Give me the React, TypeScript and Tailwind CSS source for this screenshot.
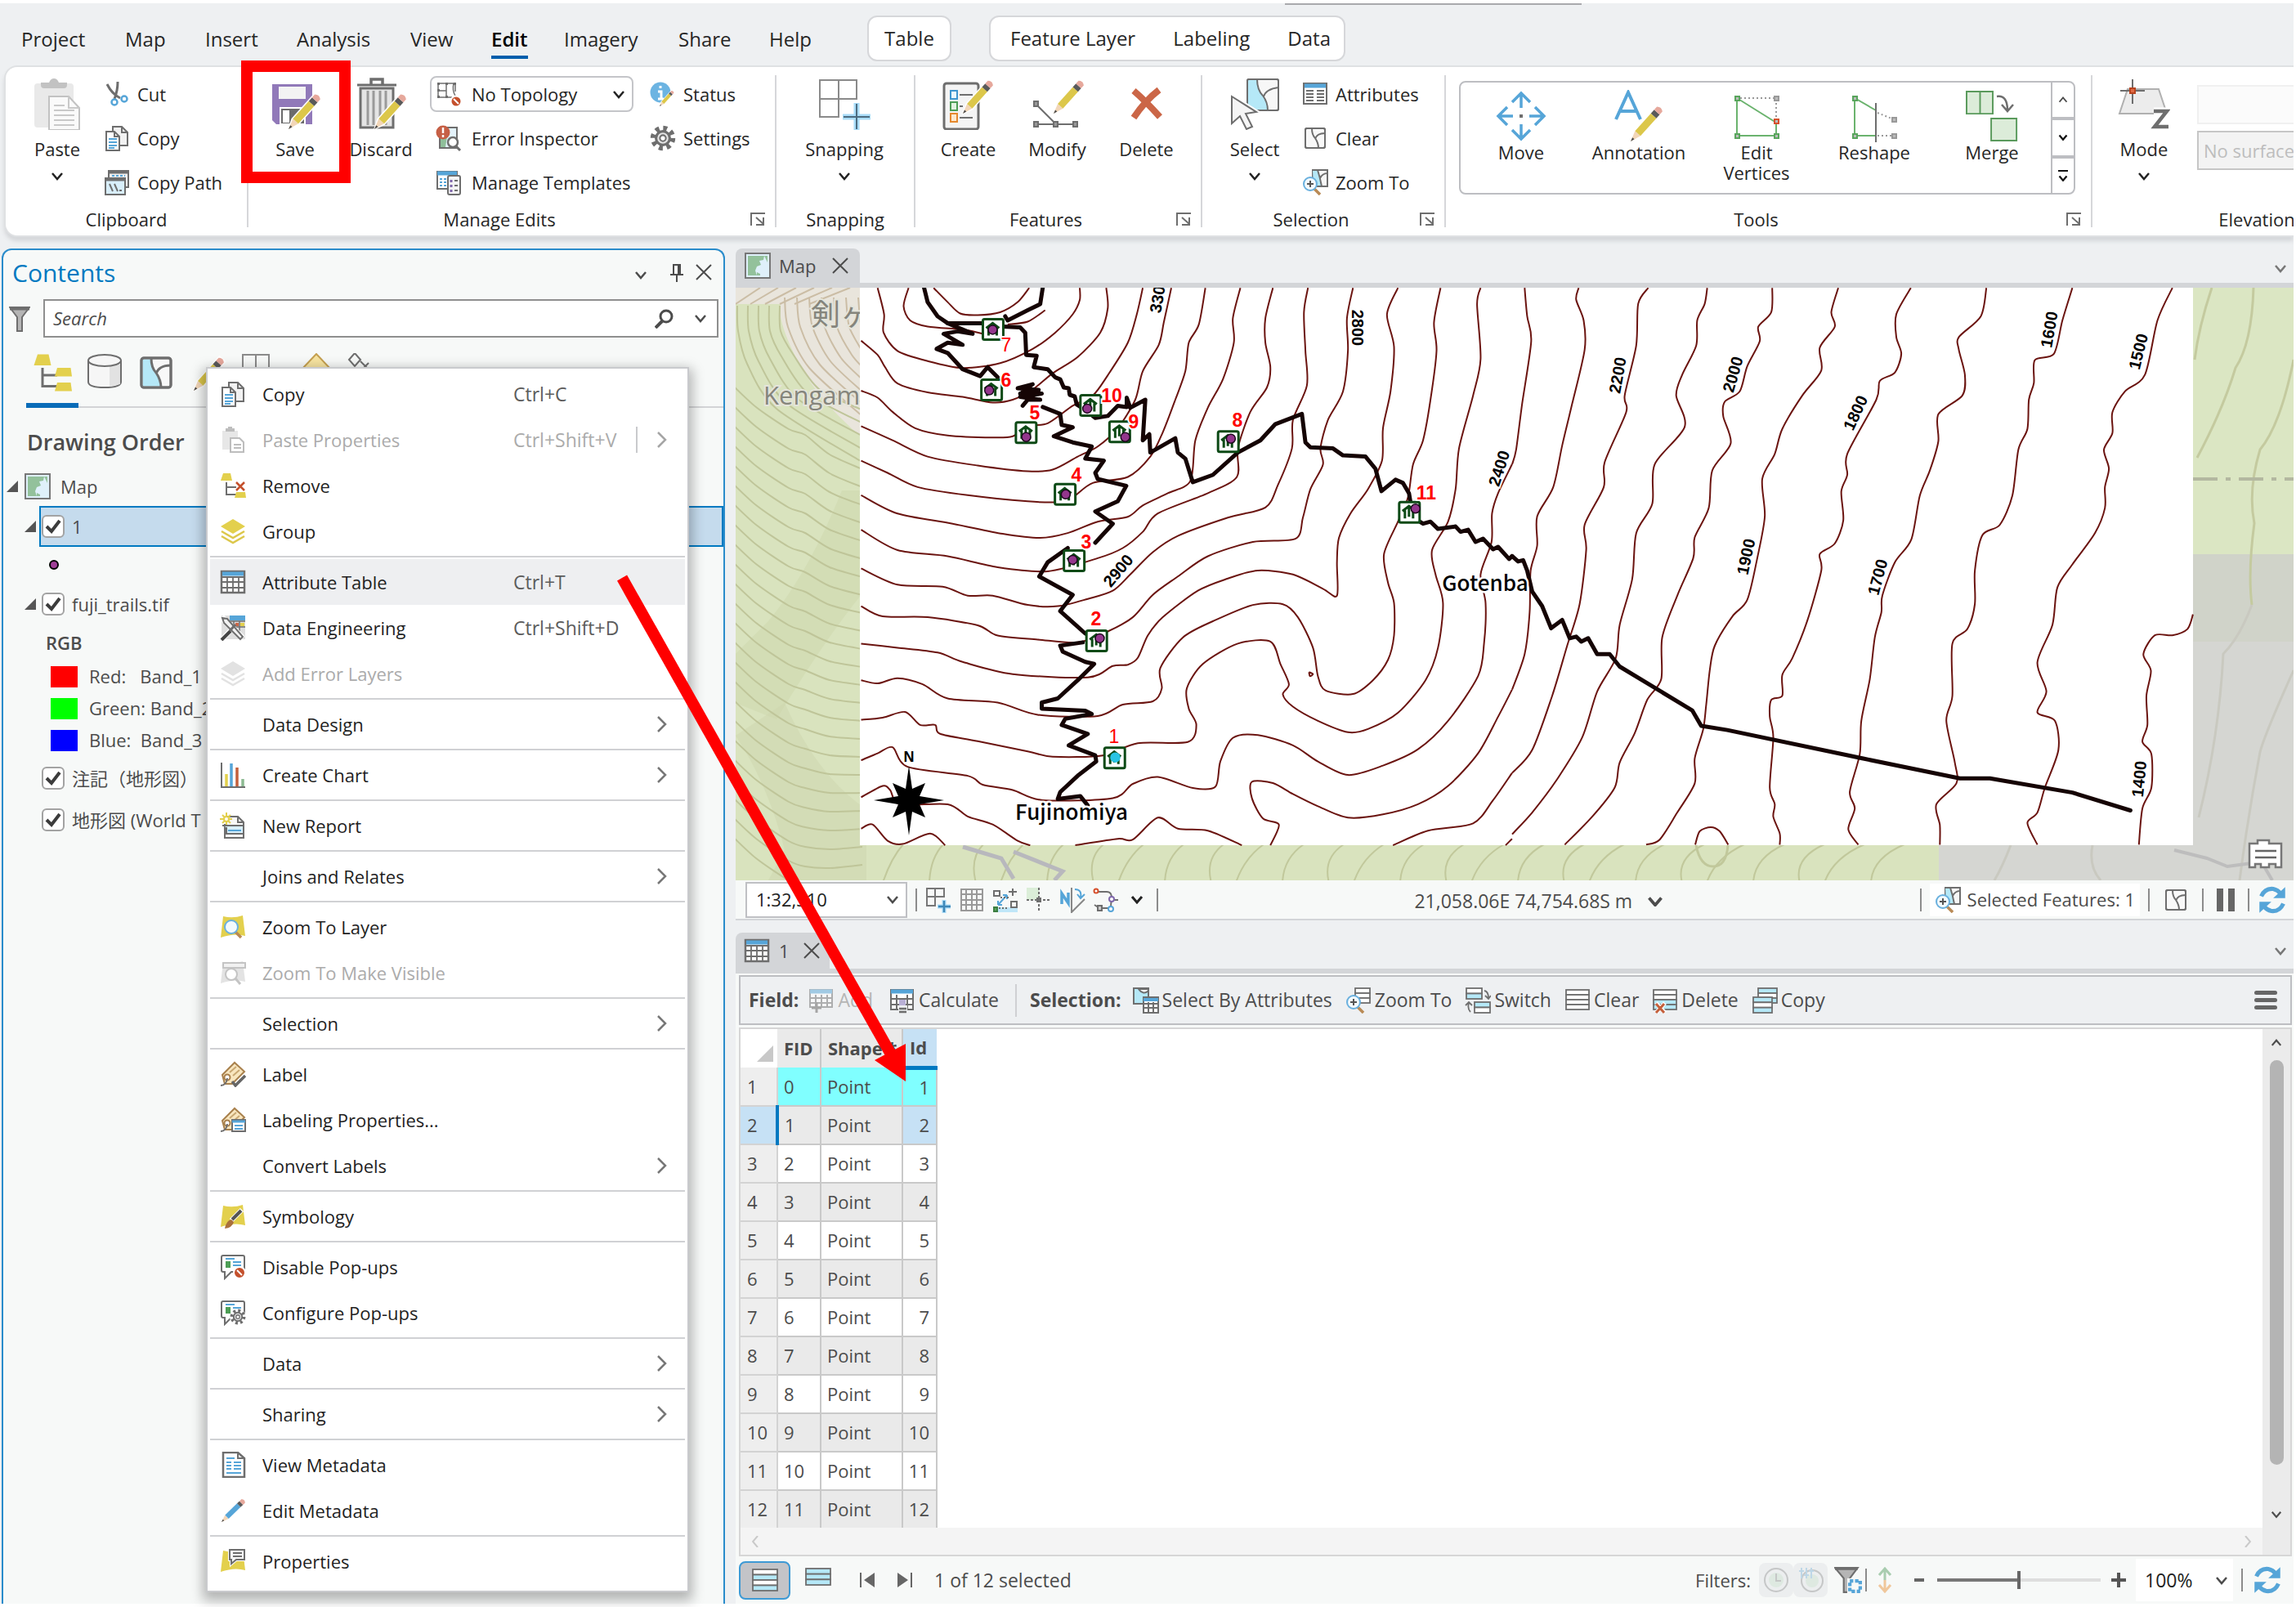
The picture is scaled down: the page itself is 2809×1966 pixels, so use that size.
import React from "react";

type P = { className?: string; children?: React.ReactNode };
const G = "#6e6e6e";
const BL = "#56a5d8";
const PALE = "#b5e8f7";
const YEL = "#e3d04d";

function I({ className = "size-8", children, vb = "0 0 32 32" }: P & { vb?: string }) {
  return (
    <svg viewBox={vb} className={className + " shrink-0"} fill="none" stroke={G} strokeWidth={2} aria-hidden="true">
      {children}
    </svg>
  );
}

function Pencil({ x, y, s = 1, a = 42, body = "#dcc74a" }: { x: number; y: number; s?: number; a?: number; body?: string }) {
  return (
    <g transform={`translate(${x} ${y}) rotate(${a}) scale(${s})`} stroke="none">
      <path d="M0 2L-6-12V-56H6V-12Z" fill="#fff" />
      <path d="M0 0L-4.500-13H4.500Z" fill="#f2d6b8" />
      <path d="M0 0L-1.600-5H1.600Z" fill="#4a4a4a" />
      <path d="M-4.500-13H4.500V-42H-4.500Z" fill={body} />
      <path d="M-4.500-42H4.500V-48H-4.500Z" fill="#5a5a5a" />
      <path d="M-4.500-48H4.500V-53Q0-57-4.500-53Z" fill="#e6a89c" />
    </g>
  );
}

function Chevron({ className = "w-4", color = "#4c4c4c", w = 2.5, d = "M2 2L8 9L14 2" }: { className?: string; color?: string; w?: number; d?: string }) {
  return (
    <svg viewBox="0 0 16 11" className={className + " shrink-0"} fill="none" stroke={color} strokeWidth={w} aria-hidden="true">
      <path d={d} />
    </svg>
  );
}
function Close({ className = "size-5" }: P) {
  return (
    <svg viewBox="0 0 20 20" className={className} fill="none" stroke="#4c4c4c" strokeWidth={2} aria-hidden="true">
      <path d="M1 1L19 19M19 1L1 19" />
    </svg>
  );
}

/* ---------- large ribbon icons ---------- */
const big = "size-16";
const PasteBig = () => (
  <I className={big} vb="0 0 64 64">
    <rect x="4" y="7" width="48" height="54" rx="4" fill="#e9e9e9" stroke="none" />
    <path d="M12 6H22Q24 1 28 1T34 6H44V9Q44 13 40 13H16Q12 13 12 9Z" fill="#c2c2c2" stroke="none" />
    <path d="M22 23H46L59 37V64H22Z" fill="#fafafa" stroke="#c2c2c2" />
    <path d="M46 23V37H59M28 34H41M28 40H53M28 46H53M28 52H53M28 58H53" stroke="#c9c9c9" />
  </I>
);
const SaveBig = () => (
  <I className={big} vb="0 0 64 64">
    <path d="M4 8H53V57H9L4 52Z" fill="#9179b9" stroke="none" />
    <path d="M12 11H45V26H12Z" fill="#f3f3f3" stroke="none" />
    <path d="M14 37H44V57H14Z" fill="#6b6b6b" stroke="#fff" />
    <path d="M17 40H25V55H17Z" fill="#fff" stroke="none" />
    <Pencil x={24} y={63} />
  </I>
);
const DiscardBig = () => (
  <I className={big} vb="0 0 64 64">
    <path d="M20 8V2H34V8" strokeWidth="3.500" />
    <path d="M3 9H51" strokeWidth="3" />
    <path d="M7 13H47V61H7Z" fill="#e4e4e4" strokeWidth="3" />
    <path d="M16 16V58M23 16V58M31 16V58M38 16V58" stroke="#9a9a9a" strokeWidth="3" />
    <Pencil x={24} y={63} />
  </I>
);
const SnapBig = () => (
  <I className={big} vb="0 0 64 64">
    <path d="M2 3H47V26H25V48H2Z M2 26H25V3" stroke="#8a8a8a" />
    <path d="M30 48H64M47 31V64" stroke="#a9dcf8" strokeWidth="7" />
    <path d="M31 48H63M47 32V63" stroke="#4c6c80" />
  </I>
);
const CreateBig = () => (
  <I className={big} vb="0 0 64 64">
    <rect x="2" y="7" width="42" height="56" rx="3" fill="#f4f4f4" strokeWidth="3" />
    <path d="M10 16H18V26H10Z" stroke="#3f95cf" fill="#eaf6fd" />
    <path d="M10 30H18V40H10Z" stroke="#4d9e55" fill="#e2f3e0" />
    <path d="M10 44H18V54H10Z" stroke="#e5892f" fill="#fde9cf" />
    <path d="M21 21H37M21 35H25M21 49H37" />
    <Pencil x={25} y={44} s={0.95} />
  </I>
);
const ModifyBig = () => (
  <I className={big} vb="0 0 64 64">
    <path d="M5 32L30 57M5 57H54" />
    <path d="M3 29H8V35H3ZM3 54H8V60H3ZM27 54H32V60H27ZM51 54H56V60H51Z" fill="#999" />
    <Pencil x={27} y={44} s={0.95} />
  </I>
);
const DeleteBig = () => (
  <I className={big} vb="0 0 64 64">
    <path d="M16 16Q30 28 48 48M47 15Q30 28 16 49" stroke="#cb6647" strokeWidth="8" />
  </I>
);
const SelectBig = () => (
  <I className={big} vb="0 0 64 64">
    <rect x="23" y="2" width="38" height="38" rx="2" fill="#f7f7f7" />
    <path d="M24 3H35Q35 15 42 22Q48 30 47 39H24Z" fill={PALE} stroke="none" />
    <path d="M35 2Q35 15 42 22Q48 30 48 40M43 23Q46 14 61 12" />
    <rect x="23" y="2" width="38" height="38" rx="2" />
    <path d="M4 23L34 42L21 44L29 60L22 63L14 47L4 56Z" fill="#f5f5f5" stroke="#fff" strokeWidth="6" />
    <path d="M4 23L34 42L21 44L29 60L22 63L14 47L4 56Z" fill="#f5f5f5" />
  </I>
);
const MoveBig = () => (
  <I className={big} vb="0 0 64 64">
    <g stroke={BL} strokeWidth="3.500">
      <path d="M32 22V5M21 15L32 4L43 15M32 42V59M21 49L32 60L43 49M22 32H5M15 21L4 32L15 43M42 32H59M49 21L60 32L49 43" />
    </g>
    <path d="M30 30H34V34H30Z" fill={G} stroke="none" />
  </I>
);
const AnnoBig = () => (
  <I className={big} vb="0 0 64 64">
    <path d="M4 36L19 3L34 36M9 26H29" stroke={BL} strokeWidth="4" />
    <Pencil x={22} y={63} />
  </I>
);
const Sq = ({ x, y, c = "#58a55c" }: { x: number; y: number; c?: string }) => <rect x={x - 2} y={y - 2} width="5" height="5" fill="#bbb" stroke={c} />;
const EditVertBig = () => (
  <I className={big} vb="0 0 64 64">
    <path d="M8 10V56H56V40L8 10" stroke="#6bb36e" />
    <path d="M12 10H56V36" stroke="#999" strokeDasharray="2 3" />
    <Sq x={8} y={10} /><Sq x={8} y={56} /><Sq x={56} y={56} /><Sq x={56} y={10} c="#999" /><Sq x={56} y={38} c="#d6502c" />
  </I>
);
const ReshapeBig = () => (
  <I className={big} vb="0 0 64 64">
    <path d="M8 56V10L34 25M8 56H34" stroke="#6bb36e" />
    <path d="M36 28L56 36M36 56H56" stroke="#999" strokeDasharray="2 3" />
    <path d="M34 16V64" />
    <Sq x={8} y={10} /><Sq x={8} y={56} /><Sq x={56} y={56} c="#999" /><Sq x={56} y={36} c="#999" />
  </I>
);
const MergeBig = () => (
  <I className={big} vb="0 0 64 64">
    <path d="M0 2H33V30H0ZM17 2V30M31 36H63V64H31Z" fill="#dcecd9" stroke="#5a9a5c" transform="translate(1 0) scale(.97)" />
    <path d="M38 8Q51 6 51 25M44 18L51 26L58 18" strokeWidth="2.500" />
  </I>
);
const ModeBig = () => (
  <I className={big} vb="0 0 64 64">
    <path d="M12 14H50L60 44H2Z" fill="#ececec" stroke="#b0b0b0" />
    <path d="M18 2V32M3 16H33" />
    <path d="M15 13H21V19H15Z" fill="#e06a45" stroke="#b8441f" />
    <path d="M44 41H60L45 60H62" stroke="#fff" strokeWidth="9" />
    <path d="M44 41H60L45 60H62" strokeWidth="4.500" />
  </I>
);

/* ---------- small icons ---------- */
const CopyI = () => (
  <I>
    <path d="M11 2H22L29 9V25H11Z" fill="#f2f2f2" />
    <path d="M22 2V9H29" />
    <path d="M3 8H13L19 14V31H3Z" fill="#fff" />
    <path d="M13 8V14H19" />
    <path d="M6 17H16M6 21H16M6 25H16M6 28H13" stroke={BL} />
  </I>
);
const CutI = () => (
  <I>
    <path d="M4 4Q10 16 20 21M17 1Q17 12 13 22" strokeWidth="3" />
    <circle cx="13" cy="26" r="3.500" stroke={BL} strokeWidth="2.500" /><circle cx="25" cy="22" r="3.500" stroke={BL} strokeWidth="2.500" />
  </I>
);
const CopyPathI = () => (
  <I>
    <path d="M6 2H30V22H6Z" fill="#eee" /><path d="M6 4H30" strokeWidth="3" /><path d="M10 8H26" stroke={BL} strokeDasharray="3 2" />
    <path d="M2 11H26V31H2Z" fill="#d8eefa" /><path d="M2 13H26" strokeWidth="3" /><path d="M7 18L11 27M13 18L17 27M19 26H22" />
  </I>
);
const No = ({ x, y, r = 7 }: { x: number; y: number; r?: number }) => (
  <g stroke="#fff"><circle cx={x} cy={y} r={r} fill="#c4502c" /><path d={`M${x - 3} ${y - 3}L${x + 3} ${y + 3}`} /></g>
);
const TopoI = () => (
  <I>
    <path d="M3 3H24V13M3 3V20H20M13 3V20M3 12H13M22 3Q20 12 24 18" strokeWidth="1.500" />
    <path d="M2 2H5V5H2ZM12 2H15V5H12ZM22 2H25V5H22ZM2 18H5V21H2ZM12 18H15V21H12ZM2 10H5V13H2Z" fill={G} stroke="none" />
    <No x={25} y={25} r={6.500} />
  </I>
);
const ErrI = () => (
  <I>
    <path d="M5 3H26V28H5Z" fill="#e3f2fa" /><path d="M6 14H14L12 27H6Z" fill="#8fbf9a" stroke="none" />
    <circle cx="21" cy="21" r="6" fill="#fff" strokeWidth="2.500" /><path d="M25 26L30 31" strokeWidth="3" />
    <circle cx="9" cy="9" r="8.500" fill="#c65f45" stroke="none" /><path d="M9 3V10M9 12V15" stroke="#fff" strokeWidth="2.500" />
  </I>
);
const TemplI = () => (
  <I>
    <path d="M2 3H26V24H2Z" fill="#fff" /><path d="M2 5H26" stroke={BL} strokeWidth="5" /><path d="M5 12H14M5 16H14M5 20H14" stroke={BL} strokeDasharray="3 2" />
    <rect x="15" y="8" width="15" height="23" rx="2" fill="#f5f5f5" /><path d="M19 13V29" stroke="#8068ac" strokeWidth="3" strokeDasharray="3 3" /><path d="M23 14H27M23 20H27M23 26H27" />
  </I>
);
const StatusI = () => (
  <I>
    <circle cx="13" cy="14" r="12.500" fill="#6cb4e2" stroke="none" /><path d="M13 6V9M10 13H14V21M10 22H17" stroke="#fff" strokeWidth="3" />
    <Pencil x={12} y={31} s={0.45} />
  </I>
);
const Gear = ({ x = 16, y = 16, s = 1 }) => (
  <g transform={`translate(${x} ${y}) scale(${s})`}>
    <circle r="11.500" strokeWidth="6" strokeDasharray="4.500 4.530" stroke={G} />
    <circle r="8" fill="#e4e4e4" strokeWidth="3" /><circle r="3.500" fill="#fff" />
  </g>
);
const GearI = () => <I><Gear s={1.05} /></I>;
const AttrI = () => (
  <I><path d="M2 3H30V28H2Z" fill="#fff" /><path d="M3 6H29" stroke={BL} strokeWidth="5" /><path d="M5 12H14M5 16H14M5 20H14M5 24H14M18 12H27M18 16H27M18 20H27M18 24H27" /></I>
);
const ShapeI = ({ className, blue = false }: { className?: string; blue?: boolean }) => (
  <I className={className}>
    <rect x="4" y="4" width="24" height="24" rx="2" fill="#f8f8f8" />
    {blue && <path d="M5 5H12Q12 12 16 16Q20 22 20 27H5Z" fill={PALE} stroke="none" />}
    <path d="M12 4Q12 12 16 16Q20 22 20 28M16 17Q18 10 28 10" /><rect x="4" y="4" width="24" height="24" rx="2" />
  </I>
);
const Mag = ({ x = 10, y = 18, plus = true }) => (
  <>
    <path d={`M${x + 5} ${y + 6}L${x + 12} ${y + 13}`} stroke="#b98a55" strokeWidth="3.500" />
    <circle cx={x} cy={y} r="8" fill="#f3fafe" stroke="#69b0de" />
    {plus && <path d={`M${x - 4} ${y}H${x + 4}M${x} ${y - 4}V${y + 4}`} stroke="#555" />}
  </>
);
const ZoomI = () => (
  <I><path d="M13 1H31V21H13Z" fill="#f7f7f7" /><path d="M13 2H19L24 20H14Z" fill={PALE} stroke="none" /><path d="M19 1Q22 10 24 21M22 11Q25 5 31 5" /><Mag /></I>
);
const GridI = ({ className }: P) => (
  <I className={className}><path d="M2 3H30V29H2Z" fill="#fff" strokeWidth="2.500" /><path d="M3 6H29" stroke={BL} strokeWidth="5" /><path d="M2 10H30M2 16H30M2 23H30M9 10V29M16 10V29M23 10V29" strokeWidth="1.800" /></I>
);
const Stack = ({ c, c2 }: { c: string; c2: string }) => (
  <I><path d="M16 1L31 10L16 19L1 10Z" fill={c} stroke="none" /><path d="M2 16L16 24L30 16M2 22L16 30L30 22" stroke={c2} strokeWidth="2.500" /></I>
);
const Tree = ({ x = false, className }: { x?: boolean; className?: string }) => (
  <I className={className}>
    <path d="M4 1H13L15 10H1Z" fill={YEL} stroke="none" /><path d="M8 12V27H20M8 18H20" />
    {x ? <path d="M20 12L30 22M30 12L20 22" stroke="#c4502c" strokeWidth="2.500" /> : <path d="M20 12H31L32 19H18Z" fill={YEL} stroke="none" />}
    <path d="M20 24H31L32 31H18Z" fill={YEL} stroke="none" />
  </I>
);
const PastePropI = () => (
  <I><g opacity=".45"><path d="M3 5H22V14H12V28H3Z" fill="#ccc" stroke="none" /><path d="M7 4H18M10 1H15" strokeWidth="4" /><path d="M13 14H24L29 19V31H13Z" fill="#fff" /><path d="M17 22H26M17 26H26" /></g></I>
);
const EngI = () => (
  <I><path d="M2 1H31V30H2Z" fill="#dedede" stroke="none" /><path d="M12 4H31" stroke={BL} strokeWidth="6" /><path d="M10 8H31M17 8V20M24 8V22M17 15H31" strokeWidth="1.500" /><path d="M19 10H23V14H19Z" fill="#cb6647" stroke="none" /><path d="M25 10H30V14H25Z" fill={YEL} stroke="none" /><path d="M2 3L28 29" stroke="#fff" strokeWidth="8" /><path d="M2 31L17 15" stroke="#fff" strokeWidth="6" /><path d="M3 4L9 5L28 27L25 30L5 10Z" fill="#f2f2f2" /><path d="M2 31L13 20" stroke="#444" strokeWidth="4" /><path d="M12 20L19 12" strokeWidth="3" /></I>
);
const ChartI = () => (
  <I><g strokeWidth="3.500"><path d="M8 15V30" stroke={YEL} /><path d="M14 2V30" stroke={BL} /><path d="M21 7V30" stroke="#c4603c" /><path d="M28 21V30" stroke="#8cba92" /></g><path d="M2 1V31H31" /></I>
);
const ReportI = () => (
  <I><path d="M8 5H22L29 12V31H6V14" fill="#f7f7f7" /><path d="M22 5V12H29" /><path d="M3 16H29V26H8V18" fill="#d8effb" stroke={G} /><path d="M10 22H26" stroke={BL} /><path d="M8 0V15M0 8H15M3 3L13 13M13 3L3 13" stroke={YEL} /><circle cx="8" cy="8" r="3" fill="#fff" stroke={YEL} /></I>
);
const Sheet = ({ c = YEL }) => <path d="M4 3Q16 6 28 2L31 27Q18 23 1 29Z" fill={c} stroke="none" />;
const ZoomLayerI = () => <I><Sheet /><Mag x={14} y={16} plus={false} /></I>;
const ZoomVisI = () => <I><g opacity=".4"><Sheet c="#bbb" /><path d="M4 4H31V10H4Z" fill="#ddd" /><circle cx="14" cy="18" r="7" fill="#fff" /><path d="M19 23L25 30" strokeWidth="3" /></g></I>;
const Tag = () => (
  <><path d="M3 17L18 2L30 13L15 28H6Z" fill="#f8e6bf" stroke="#a9814d" /><path d="M12 14L20 7M16 18L24 11" stroke="#c9a873" /><circle cx="9" cy="20" r="3.500" fill="#fff" stroke="#a9814d" /><path d="M1 30Q8 30 9 21" /></>
);
const LabelI = () => <I><Tag /><path d="M15 25L19 30L31 18" stroke="#666" strokeWidth="3.500" /></I>;
const LabelPropI = () => <I><Tag /><path d="M15 16H31V30H15Z" fill="#fff" /><path d="M15 18H31" stroke={BL} strokeWidth="3" /><path d="M18 23H28M18 27H28" stroke={BL} /></I>;
const SymI = () => <I><Sheet /><path d="M27 8L14 21" stroke="#fff" strokeWidth="6" /><path d="M26 9L15 20" stroke="#555" strokeWidth="4" /><path d="M14 20Q8 21 6 31Q15 30 17 23Z" fill="#a9703c" stroke="none" /></I>;
const Bubble = () => (
  <><path d="M4 2H28Q30 2 30 4V20Q30 22 28 22H14L6 30V22H4Q2 22 2 20V4Q2 2 4 2Z" fill="#fff" /><path d="M7 9H13V17H7Z" fill="#4d9e55" stroke="none" /><path d="M7 6H18M16 10H26M16 14H26" stroke={BL} /></>
);
const PopDisI = () => <I><Bubble /><No x={24} y={23} /></I>;
const PopCfgI = () => <I><Bubble /><g><circle cx="22" cy="21" r="10" fill="#fff" stroke="none" /><Gear x={22} y={21} s={0.65} /></g></I>;
const MetaI = () => <I><path d="M4 1H22L30 8V31H4Z" fill="#fff" strokeWidth="2.500" /><path d="M22 1V8H30" /><path d="M8 8H18M8 13H14M17 13H26M8 17H14M17 17H26M8 21H14M17 21H26M8 26H26" stroke={BL} /></I>;
const EditMetaI = () => <I><Pencil x={2} y={30} s={0.7} a={46} body="#56a5d8" /></I>;
const PropI = () => <I><Sheet /><path d="M12 1H31V14H20L14 19V14H12Z" fill="#f7f7f7" stroke="#fff" strokeWidth="4" /><path d="M12 2H30V14H20L14 19V14H12Z" fill="#f7f7f7" /><path d="M16 6H27M16 10H27" /></I>;
const MapI = () => (
  <I><path d="M1 1H31V31H1Z" fill="#dff0fa" stroke="#777" /><path d="M4 4H24L23 9L18 10L20 15L15 17L13 22L15 28H4Z" fill="#93c19b" stroke="none" /><path d="M15 24L19 26V28H15ZM24 4H28V12Z" fill="#93c19b" stroke="none" /></I>
);
const AddGridI = () => <I><path d="M2 2H23V12H12V23H2ZM2 12H12V2" stroke="#777" /><path d="M15 24H31M23 16V32" stroke="#a9dcf8" strokeWidth="5" /><path d="M16 24H31M23 17V31" stroke="#3f88b8" strokeWidth="2.500" /></I>;
const FullGridI = () => <I><path d="M3 3H29V29H3ZM9 3V29M16 3V29M22 3V29M3 9H29M3 16H29M3 22H29" stroke="#999" /></I>;
const InferI = () => <I><path d="M1 31V25H31V31Z" fill="#bfe6f8" stroke="none" /><path d="M2 5H9V11H2ZM23 18H30V25H23Z" /><path d="M25 2V11M20 6H30" /><path d="M7 22L18 10M18 10H13M18 10V15M7 22V17M7 22H12" stroke={BL} /><path d="M10 13H20M8 26H20" strokeDasharray="2 2" /><path d="M2 25H6V30H2Z" fill="#58a55c" stroke="#3d7e41" /></I>;
const CrossI = () => <I><path d="M1 1H16V16H1Z" fill="#dbeed8" stroke="none" /><path d="M16 1V31M1 16H31" strokeDasharray="3 2" /><path d="M13 13H19V19H13Z" fill={G} stroke="none" /></I>;
const NorthI = () => <I><path d="M3 21V8L11 20V7" stroke={BL} strokeWidth="3.500" /><path d="M15 1V31L31 15" stroke="#888" /><path d="M19 3Q28 3 26 13M22 9L26 14L31 9" stroke={BL} /></I>;
const RouteI = () => <I><path d="M4 6H17Q24 6 23 16Q22 20 22 26H8M23 16H31M2 22L8 26" /><circle cx="4" cy="5" r="2.500" fill="#fff" stroke="#d6502c" /><circle cx="23" cy="15" r="3" fill="#fff" stroke="#8068ac" /><circle cx="22" cy="27" r="3" fill="#fff" stroke={BL} /><path d="M6 23H11V29H6Z" fill="#ccc" /></I>;
const Refresh = ({ className = "size-9" }: P) => (
  <I className={className}><path d="M4 12Q8 3 17 4Q22 5 25 9M28 20Q24 29 15 28Q10 27 7 23" stroke={BL} strokeWidth="4.500" /><path d="M30 2V14H17ZM2 30V18H15Z" fill={BL} stroke="none" /></I>
);
const FieldAddI = () => <I><g opacity=".5"><path d="M2 3H29V24H2Z" fill="#fff" /><path d="M2 5H29" stroke={BL} strokeWidth="5" /><path d="M2 13H29M2 19H29M9 9V24M16 9V24M23 9V24" /></g><path d="M10 18V31M4 25H16" stroke="#a5a5a5" strokeWidth="3" /></I>;
const CalcI = () => <I><path d="M2 3H29V27H2Z" fill="#fff" /><path d="M2 5H29" stroke={BL} strokeWidth="5" /><path d="M2 14H29M2 21H29M9 9V27M22 9V27" /><path d="M12 15H20V22H12Z" fill="#b9b0d6" stroke="none" /><path d="M11 22H22V32H11Z" fill="#eef0f2" stroke="none" /><path d="M12 26H21M12 30H21" strokeWidth="2.500" /></I>;
const SelAttrI = () => <I><path d="M1 1H19V20H1Z" fill={PALE} /><path d="M7 2Q13 10 19 4V2Z" fill="#fff" /><path d="M13 12H31V31H13Z" fill="#fff" /><path d="M13 15H31" stroke={BL} strokeWidth="4" /><path d="M13 20H31M13 25H31M19 18V31M25 18V31" /></I>;
const Rows = ({ x, y, w, h, f = ["#fff", "#fff", "#fff"] }: { x: number; y: number; w: number; h: number; f?: string[] }) => (
  <>{f.map((c, i) => <rect key={i} x={x} y={y + (i * h) / f.length} width={w} height={h / f.length} fill={c} strokeWidth="1.800" />)}</>
);
const ZoomRowsI = () => <I><Rows x={12} y={1} w={18} h={18} /><Mag /></I>;
const SwitchI = () => <I><Rows x={2} y={1} w={19} h={13} f={["#fff", PALE]} /><Rows x={12} y={18} w={19} h={13} f={[PALE, "#fff"]} /><path d="M24 4Q29 5 29 13M25 10L29 14L32 10M7 30Q3 26 5 19M1 22L5 18L9 22" strokeWidth="1.800" /></I>;
const ClearRowsI = () => <I><Rows x={2} y={3} w={28} h={24} f={["#fff", "#fff", "#fff", "#fff"]} /></I>;
const DelRowsI = () => <I><Rows x={2} y={3} w={28} h={24} f={["#fff", "#fff", PALE, PALE]} /><path d="M5 19L16 31M16 19L5 31" stroke="#fff" strokeWidth="5" /><path d="M5 20L15 31M15 20L5 31" stroke="#c4603c" strokeWidth="3" /></I>;
const CopyRowsI = () => <I><Rows x={8} y={1} w={23} h={18} f={[PALE, "#fff", PALE]} /><Rows x={2} y={12} w={23} h={19} f={[PALE, "#fff", PALE]} /></I>;

/* ---------- ribbon ---------- */
function BigBtn({ icon, label, w, arrow }: { icon: React.ReactNode; label: string; w: string; arrow?: boolean }) {
  return (
    <button className={w + " flex shrink-0 flex-col items-center pt-[7px]"}>
      {icon}
      <span className="mt-[7px] leading-8">{label}</span>
      {arrow && <Chevron className="mt-3 w-4" color="#222" />}
    </button>
  );
}
function Small({ icon, label, className = "gap-[9px]" }: { icon: React.ReactNode; label: string; className?: string }) {
  return (
    <button className={className + " flex h-[54px] items-center whitespace-nowrap"}>
      {icon}
      <span>{label}</span>
    </button>
  );
}
function Group({ title, w, launcher, children, last }: { title: string; w: string; launcher?: boolean; children: React.ReactNode; last?: boolean }) {
  return (
    <section aria-label={title} className={w + " flex shrink-0"}>
      <div className="flex min-w-0 flex-1 flex-col">
        <div className="flex h-[162px]">{children}</div>
        <div className="flex h-9 items-center">
          <span className="flex-1 text-center">{title}</span>
          {launcher && (
            <button aria-label={title + " options"} className="mr-3">
              <svg viewBox="0 0 18 16" className="w-[18px]" fill="none" stroke={G} strokeWidth="2" aria-hidden="true"><path d="M1 16V1H18M7 6L16 14M16 6V15H7" /></svg>
            </button>
          )}
        </div>
      </div>
      {!last && <div className="mt-1 mb-2 w-[2px] bg-[#d6d7da]" />}
    </section>
  );
}
function Tool({ icon, label }: { icon: React.ReactNode; label: string }) {
  return (
    <button className="flex w-36 flex-col items-center px-6 pt-[9px] leading-[25px]">
      {icon}
      <span>{label}</span>
    </button>
  );
}

function Ribbon() {
  return (
    <>
      <nav className="flex h-[76px] items-center pl-[26px] text-[24px]">
        {[["Project", "w-[127px]"], ["Map", "w-[98px]"], ["Insert", "w-[112px]"], ["Analysis", "w-[139px]"], ["View", "w-[99px]"], ["Edit", "w-[89px]"], ["Imagery", "w-[140px]"], ["Share", "w-[111px]"], ["Help", "w-[120px]"]].map(([t, w]) => (
          <a key={t} href="#" className={w + " mt-3 shrink-0"}>
            <span className={t === "Edit" ? "border-b-4 border-[#005eac] pb-1 font-semibold text-black" : ""}>{t}</span>
          </a>
        ))}
        <div className="mt-[10px] flex h-14 w-[103px] shrink-0 items-center justify-center rounded-xl border-2 border-[#d6d7da] bg-white">
          <a href="#">Table</a>
        </div>
        <div className="mt-[10px] ml-[46px] flex h-14 w-[436px] shrink-0 items-center justify-between rounded-xl border-2 border-[#d6d7da] bg-white pr-4 pl-6">
          <a href="#">Feature Layer</a>
          <a href="#">Labeling</a>
          <a href="#">Data</a>
        </div>
      </nav>
      <div className="ml-[5px] flex overflow-hidden rounded-l-2xl border-2 border-r-0 border-[#dfe1e3] bg-white pt-[6px] pb-[2px] text-[22px] shadow-[0_5px_5px_#d5d7da]">
        <Group title="Clipboard" w="w-[297px]">
          <BigBtn icon={<PasteBig />} label="Paste" w="ml-[10px] w-[106px]" arrow />
          <div className="ml-1">
            <Small icon={<CutI />} label="Cut" />
            <Small icon={<CopyI />} label="Copy" />
            <Small icon={<CopyPathI />} label="Copy Path" />
          </div>
        </Group>
        <Group title="Manage Edits" w="w-[646px]" launcher>
          <BigBtn icon={<SaveBig />} label="Save" w="w-[114px]" />
          <BigBtn icon={<DiscardBig />} label="Discard" w="w-[96px]" />
          <div className="ml-3">
            <div className="flex h-[54px] items-center">
              <label className="flex h-11 w-[249px] items-center rounded-lg border-2 border-[#c4c5c9] bg-white pr-2 pl-[5px]">
                <TopoI />
                <select aria-label="Topology" className="ml-3 min-w-0 flex-1 appearance-none bg-transparent outline-none">
                  <option>No Topology</option>
                </select>
                <Chevron color="#222" />
              </label>
            </div>
            <Small icon={<ErrI />} label="Error Inspector" className="gap-3 pl-[7px]" />
            <Small icon={<TemplI />} label="Manage Templates" className="gap-3 pl-[7px]" />
          </div>
          <div className="ml-5">
            <Small icon={<StatusI />} label="Status" />
            <Small icon={<GearI />} label="Settings" />
          </div>
        </Group>
        <Group title="Snapping" w="w-[170px]">
          <BigBtn icon={<SnapBig />} label="Snapping" w="w-[166px]" arrow />
        </Group>
        <Group title="Features" w="w-[351px]" launcher>
          <BigBtn icon={<CreateBig />} label="Create" w="ml-[10px] w-[109px]" />
          <BigBtn icon={<ModifyBig />} label="Modify" w="w-[109px]" />
          <BigBtn icon={<DeleteBig />} label="Delete" w="w-[109px]" />
        </Group>
        <Group title="Selection" w="w-[298px]" launcher>
          <BigBtn icon={<SelectBig />} label="Select" w="ml-3 w-[104px]" arrow />
          <div className="ml-[6px]">
            <Small icon={<AttrI />} label="Attributes" />
            <Small icon={<ShapeI />} label="Clear" />
            <Small icon={<ZoomI />} label="Zoom To" />
          </div>
        </Group>
        <Group title="Tools" w="w-[791px]" launcher>
          <div className="mt-[11px] ml-4 flex h-[139px] w-[754px] overflow-hidden rounded-lg border-2 border-[#bdbec2] pl-[2px]">
            <Tool icon={<MoveBig />} label="Move" />
            <Tool icon={<AnnoBig />} label="Annotation" />
            <Tool icon={<EditVertBig />} label="Edit Vertices" />
            <Tool icon={<ReshapeBig />} label="Reshape" />
            <Tool icon={<MergeBig />} label="Merge" />
            <div className="flex flex-1 flex-col divide-y-4 divide-[#bdbec2] border-l-2 border-[#bdbec2]">
              <button aria-label="Previous tools" className="flex flex-1 items-center justify-center"><Chevron className="w-3" d="M2 9L8 2L14 9" /></button>
              <button aria-label="Next tools" className="flex flex-1 items-center justify-center"><Chevron className="w-3" color="#111" w={3} /></button>
              <button aria-label="All tools" className="flex flex-1 flex-col items-center justify-center gap-1"><span className="h-[2px] w-3 bg-[#111]" /><Chevron className="w-3" color="#111" w={3} /></button>
            </div>
          </div>
        </Group>
        <Group title="Elevation" w="w-[402px]" last>
          <BigBtn icon={<ModeBig />} label="Mode" w="w-[126px]" arrow />
          <div className="mt-4 ml-[2px] flex w-[300px] shrink-0 flex-col gap-2">
            <input aria-label="Elevation value" disabled className="h-12 border-2 border-[#f0f0f0] bg-[#fbfbfb]" />
            <input aria-label="Surface" disabled value="No surface" readOnly className="h-12 border-2 border-[#c6c6c6] bg-[#f3f3f3] px-1.5 text-[#bdbdbd]" />
          </div>
        </Group>
      </div>
    </>
  );
}

/* ---------- contents pane ---------- */
function Check({ label }: { label: string }) {
  return (
    <label className="flex items-center gap-[9px]">
      <span className="grid">
        <input type="checkbox" defaultChecked className="col-start-1 row-start-1 size-7 appearance-none rounded-md border-2 border-[#a3a3a3] bg-white" />
        <svg viewBox="0 0 28 28" className="pointer-events-none col-start-1 row-start-1 size-7" fill="none" stroke="#3c3c3c" strokeWidth="4" aria-hidden="true"><path d="M6 14L12 20L22 7" /></svg>
      </span>
      <span className="whitespace-nowrap">{label}</span>
    </label>
  );
}
const Tri = () => <svg viewBox="0 0 14 14" className="w-[14px] shrink-0" fill="#555" aria-hidden="true"><path d="M14 0V14H0Z" /></svg>;

function Contents() {
  return (
    <aside className="ml-[2px] flex w-[885px] shrink-0 flex-col rounded-t-xl border-2 border-b-0 border-[#2a8ccb] bg-[#f7f9f8] text-[22px] text-[#4c4c4c]">
      <header className="flex h-[60px] items-start pt-[5px] pr-[14px] pl-[11px]">
        <h1 className="flex-1 text-[30px] leading-[45px] text-[#0079c1]">Contents</h1>
        <button aria-label="Pane menu" className="mt-5 mr-7"><Chevron /></button>
        <button aria-label="Pin pane" className="mt-3 mr-[15px]">
          <svg viewBox="0 0 16 22" className="w-4" fill="none" stroke="#4c4c4c" strokeWidth="2" aria-hidden="true"><path d="M4 1H12V13H4ZM10 1V13M0 13H16M8 13V22" /></svg>
        </button>
        <button aria-label="Close pane" className="mt-3"><Close /></button>
      </header>
      <div className="flex items-center gap-4 pr-[6px] pl-[7px]">
        <svg viewBox="0 0 26 32" className="w-[26px]" fill="#b5b5b5" stroke={G} strokeWidth="2" aria-hidden="true"><path d="M1 2H25L16 14V31H10V14Z" /><path d="M1 4H25" strokeWidth="3" /></svg>
        <div className="flex h-[47px] flex-1 items-center gap-6 border-2 border-[#8f8f8f] bg-white pr-3 pl-[10px]">
          <input aria-label="Search" placeholder="Search" className="min-w-0 flex-1 italic outline-none placeholder:text-[#4c4c4c]" />
          <svg viewBox="0 0 24 24" className="size-6" fill="none" stroke="#4c4c4c" strokeWidth="3" aria-hidden="true"><circle cx="14" cy="9" r="7" /><path d="M9 15L1 23" strokeWidth="4" /></svg>
          <Chevron />
        </div>
      </div>
      <div className="ml-[28px] flex h-[86px] items-start border-b-2 border-[#d3d4d6] pt-[19px]">
        <button aria-label="List by drawing order" className="flex h-[67px] w-16 justify-center border-b-[6px] border-[#0a6cb8]"><Tree className="size-12" /></button>
        <button aria-label="List by data source" className="ml-[10px]">
          <svg viewBox="0 0 44 44" className="size-11" fill="#f6f6f6" stroke={G} strokeWidth="2" aria-hidden="true"><path d="M2 9V35Q2 42 22 42T42 35V9" /><path d="M28 14H41V38L28 41Z" fill="#e2e2e2" stroke="none" /><ellipse cx="22" cy="9" rx="20" ry="7" /><path d="M42 9V35" /></svg>
        </button>
        <button aria-label="List by selection" className="ml-[17px]"><ShapeI className="size-12" blue /></button>
        <button aria-label="List by editing" className="ml-4"><I className="size-12" vb="0 0 48 48"><Pencil x={6} y={46} s={0.95} /></I></button>
        <button aria-label="List by snapping" className="ml-[14px]"><I className="size-11" vb="0 0 44 44"><path d="M4 2H36V22H4ZM20 2V22" stroke="#8a8a8a" /></I></button>
        <button aria-label="List by labeling" className="ml-[26px]"><I className="size-12" vb="0 0 48 48"><path d="M6 20L24 1L42 20L24 42Z" fill="#f6e3a0" stroke="#c5a050" /></I></button>
        <button aria-label="List by charts" className="ml-2"><I className="size-11" vb="0 0 44 44"><path d="M8 8L15 0L22 8L15 16ZM22 10L32 20M26 18L32 12" /></I></button>
      </div>
      <h2 className="mt-6 ml-[29px] text-[27px] font-semibold leading-9">Drawing Order</h2>
      <div className="mt-3 flex h-12 items-center gap-2 pl-1">
        <Tri /><MapI /><span className="ml-1">Map</span>
      </div>
      <div className="flex items-center gap-1 pl-[26px]">
        <Tri />
        <div className="flex h-[50px] flex-1 items-center border-2 border-[#0079c1] bg-[#c5dbed] pl-[1px]"><Check label="1" /></div>
      </div>
      <div className="flex h-11 items-center pl-14"><span className="size-3 rounded-full border-2 border-black bg-[#a03f98]" /></div>
      <div className="flex h-[52px] items-center gap-[7px] pl-[26px]"><Tri /><Check label="fuji_trails.tif" /></div>
      <div className="flex h-[43px] items-center pl-[52px] font-semibold">RGB</div>
      {[["Red:   Band_1", "bg-[#ff0000]"], ["Green: Band_2", "bg-[#00ff00]"], ["Blue:  Band_3", "bg-[#0000ff]"]].map(([t, c]) => (
        <div key={t} className="flex h-[39px] items-center gap-[14px] pl-[58px] whitespace-pre"><span className={c + " h-[26px] w-[33px]"} />{t}</div>
      ))}
      <div className="flex h-[54px] items-center pl-[47px]"><Check label="注記（地形図）" /></div>
      <div className="flex h-12 items-center pl-[47px]"><Check label="地形図 (World T" /></div>
    </aside>
  );
}

/* ---------- context menu ---------- */
type Item = { t: string; i?: React.ReactNode; k?: string; off?: boolean; sub?: boolean; hot?: boolean; split?: boolean };
const menu: Item[][] = [
  [{ t: "Copy", i: <CopyI />, k: "Ctrl+C" }, { t: "Paste Properties", i: <PastePropI />, k: "Ctrl+Shift+V", off: true, sub: true, split: true }, { t: "Remove", i: <Tree x /> }, { t: "Group", i: <Stack c={YEL} c2="#dcc74a" /> }],
  [{ t: "Attribute Table", i: <GridI />, k: "Ctrl+T", hot: true }, { t: "Data Engineering", i: <EngI />, k: "Ctrl+Shift+D" }, { t: "Add Error Layers", i: <Stack c="#e2e2e2" c2="#e2e2e2" />, off: true }],
  [{ t: "Data Design", sub: true }],
  [{ t: "Create Chart", i: <ChartI />, sub: true }],
  [{ t: "New Report", i: <ReportI /> }],
  [{ t: "Joins and Relates", sub: true }],
  [{ t: "Zoom To Layer", i: <ZoomLayerI /> }, { t: "Zoom To Make Visible", i: <ZoomVisI />, off: true }],
  [{ t: "Selection", sub: true }],
  [{ t: "Label", i: <LabelI /> }, { t: "Labeling Properties...", i: <LabelPropI /> }, { t: "Convert Labels", sub: true }],
  [{ t: "Symbology", i: <SymI /> }],
  [{ t: "Disable Pop-ups", i: <PopDisI /> }, { t: "Configure Pop-ups", i: <PopCfgI /> }],
  [{ t: "Data", sub: true }],
  [{ t: "Sharing", sub: true }],
  [{ t: "View Metadata", i: <MetaI /> }, { t: "Edit Metadata", i: <EditMetaI /> }],
  [{ t: "Properties", i: <PropI /> }],
];
function ContextMenu() {
  return (
    <div role="menu" className="absolute top-[449px] left-[252px] w-[591px] border-2 border-[#c9cacd] bg-white px-[3px] pt-[3px] pb-2 text-[22px] text-[#1f1f1f] shadow-[0_6px_14px_4px_rgba(0,0,0,0.28)]">
      {menu.map((sec, n) => (
        <div key={n}>
          {n > 0 && <div className="h-[6px] pt-[2px]"><div className="h-[2px] bg-[#d0d1d4]" /></div>}
          {sec.map((m) => (
            <button role="menuitem" key={m.t} disabled={m.off} className={(m.hot ? "bg-[#eeeff1] " : "") + (m.off ? "text-[#ababab] " : "") + "flex h-14 w-full items-center pl-3 text-left"}>
              <span className="w-[52px]">{m.i}</span>
              <span className="w-[307px] whitespace-nowrap">{m.t}</span>
              <span className={(m.off ? "" : "text-[#5c5c5c] ") + "w-[150px] text-[23px]"}>{m.k}</span>
              {m.split && <span className="h-8 w-[2px] bg-[#c9cacd]" />}
              {m.sub && <svg viewBox="0 0 12 20" className={(m.split ? "ml-6" : "ml-[26px]") + " w-3"} fill="none" stroke={m.off ? "#a5a5a5" : "#777"} strokeWidth="2.500" aria-hidden="true"><path d="M1 1L10 10L1 19" /></svg>}
            </button>
          ))}
        </div>
      ))}
    </div>
  );
}

/* ---------- map ---------- */
const west = (x: number, y: number): [number, number] => [890 + x * 0.6122, 290 + y * 0.4974];
const east = (x: number, y: number): [number, number] => [1850 + x * 0.612, 290 + y * 0.5102];
const pts = (s: string, f: typeof west) => s.trim().split(/\s+/).map((p) => { const [a, b] = p.split(",").map(Number); return f(a, b); });
function curve(p: [number, number][]) {
  let d = `M${p[0][0].toFixed(1)} ${p[0][1].toFixed(1)}`;
  for (let i = 0; i < p.length - 1; i++) {
    const a = p[i - 1] || p[i], b = p[i], c = p[i + 1], e = p[i + 2] || c;
    d += `C${[b[0] + (c[0] - a[0]) / 7, b[1] + (c[1] - a[1]) / 7, c[0] - (e[0] - b[0]) / 7, c[1] - (e[1] - b[1]) / 7, c[0], c[1]].map((v) => v.toFixed(1)).join(" ")}`;
  }
  return d;
}
const line = (p: [number, number][]) => "M" + p.map((q) => q.map((v) => v.toFixed(1)).join(" ")).join("L");

const westContours = [
  "412,125 440,160 465,188 500,192 545,185 580,160 603,125",
  "362,125 352,170 365,205 400,220 475,228 510,238",
  "560,215 600,208 635,180",
  "704,125 704,155 690,190 655,235 610,275 545,310 470,322 400,305 340,280 312,235 313,190 300,125",
  "757,125 760,175 745,235 700,295 650,335 610,375 570,400 530,407 470,393 400,382 340,360 315,320 300,290 267,255",
  "830,125 818,190 800,260 760,340 730,390 690,415 640,458 600,465 570,490 530,493 440,488 375,470 330,430 300,395 267,378",
  "887,125 872,210 862,265 830,330 815,400 780,470 740,515 700,540 650,572 600,576 500,562 400,540 330,500 267,465",
  "955,125 942,215 922,260 915,330 895,400 870,480 845,540 800,590 730,605 690,640 660,652 600,650 480,635 380,615 320,580 267,550",
  "1025,125 1010,200 1012,260 990,350 960,420 935,500 925,600 880,630 830,660 800,688 740,700 680,728 625,740 550,730 450,705 340,680 267,635",
  "1090,125 1075,200 1075,260 1085,320 1078,370 1045,430 1020,520 1018,590 960,630 860,680 830,725 790,765 740,790 640,822 540,812 440,785 340,770 267,720",
  "1160,125 1152,185 1155,280 1158,365 1130,450 1128,520 1100,610 1075,665 1000,690 900,735 850,775 805,830 770,870 720,890 660,908 600,905 530,882 480,882 430,860 340,855 267,815",
  "1250,125 1238,200 1240,280 1230,380 1200,450 1185,520 1190,560 1165,620 1150,690 1135,742 1050,750 960,785 900,835 850,880 810,935 760,970 700,997 620,990 540,980 500,955 400,935 310,933 267,908",
  "1340,125 1318,190 1332,270 1325,380 1310,470 1308,550 1280,620 1245,680 1222,740 1218,800 1218,882 1190,865 1130,830 1060,820 1000,840 940,870 870,935 840,980 820,1035 800,1052 770,1055 720,1083 570,1075 470,1045 420,1022 340,1010 267,1000",
  "1425,125 1412,210 1417,280 1405,400 1390,500 1370,560 1360,640 1340,700 1312,780 1320,850 1332,900 1332,980 1320,1040 1290,1090 1250,1124 1195,1115 1180,1080 1170,1010 1140,935 1110,903 1050,905 970,945 910,985 865,1060 868,1110 850,1142 790,1150 740,1178 620,1175 540,1145 440,1135 390,1100 340,1085 300,1098 267,1090",
  "1505,125 1498,165 1505,300 1490,390 1462,520 1455,620 1440,700 1408,770 1415,830 1430,900 1420,1010 1395,1090 1340,1170 1280,1210 1240,1218 1180,1190 1130,1155 1110,1125 1122,1100 1105,1050 1085,995 1020,1000 950,1050 918,1110 922,1160 937,1200 920,1242 820,1245 750,1275 650,1278 600,1265 500,1240 425,1222 415,1200 385,1200 355,1168 310,1182 267,1187",
  "1568,559 1540,630 1528,680 1527,750 1505,830 1515,900 1512,1000 1500,1080 1440,1190 1380,1260 1310,1300 1240,1323 1180,1290 1130,1250 1060,1225 1010,1232 985,1290 975,1352 930,1355 860,1328 810,1345 770,1380 630,1385 570,1360 510,1347 480,1325 360,1303 330,1255 300,1270 267,1287",
  "1568,1113 1540,1180 1500,1270 1440,1350 1380,1395 1310,1420 1240,1428 1180,1400 1130,1370 1090,1343 1048,1340 1048,1380 1070,1430 1102,1445 1085,1496",
  "1568,1318 1530,1385 1490,1442 1400,1460 1330,1496",
  "1568,1480 1555,1496",
  "267,1378 310,1350 325,1360 345,1395 440,1395 480,1425 530,1445 580,1485 605,1496",
  "267,1455 290,1445 320,1485 350,1493 405,1467 435,1496",
  "695,1496 780,1480 810,1482 860,1428 900,1455 960,1460 1028,1496",
  "1162,1070 1170,1075 1164,1080 1162,1070",
];
const eastContours = [
  "25,122 30,190 38,250 20,400 8,510 0,545",
  "133,122 128,150 143,200 145,270 120,400 100,500 82,600 50,670 50,740 37,800 35,900 25,1000 0,1085",
  "272,122 252,160 248,260 225,380 228,420 185,540 183,600 145,690 148,750 135,880 110,980 80,1100 40,1230 0,1285",
  "390,122 385,160 370,200 368,260 340,330 328,380 345,455 285,545 280,640 248,710 240,820 215,930 207,1010 170,1090 140,1200 90,1300 40,1380 0,1432",
  "520,122 518,180 492,215 495,250 470,310 455,370 425,395 422,430 437,495 400,560 393,650 365,720 362,770 330,860 300,960 298,1060 270,1110 245,1190 215,1260 205,1320 160,1390 105,1457",
  "652,122 638,180 645,215 615,265 618,320 580,380 540,460 525,520 500,580 505,670 490,770 470,870 440,910 405,980 395,1040 388,1120 382,1180 365,1250 365,1310 330,1380 295,1445 268,1457",
  "366,1457 375,1425 397,1415 415,1425 432,1457",
  "797,122 768,185 768,240 778,280 765,325 735,345 728,390 670,520 670,570 658,610 662,680 645,735 615,760 618,800 590,920 560,1010 540,1050 540,1100 518,1110 515,1150 522,1200 515,1320 525,1360 522,1390 535,1430 535,1457",
  "948,122 937,190 893,240 893,270 905,330 900,380 852,425 852,490 835,560 815,620 798,725 765,780 740,860 738,900 725,960 715,1060 698,1160 695,1240 675,1330 685,1370 672,1420 692,1457",
  "1120,122 1100,200 1083,280 1045,295 1043,350 1033,390 1030,460 1012,510 1000,620 975,690 940,715 925,800 925,880 910,940 880,975 880,1100 868,1160 885,1260 888,1310 848,1360 855,1410 855,1457",
  "1320,122 1290,200 1265,330 1225,370 1200,420 1200,470 1183,510 1193,555 1185,600 1185,650 1165,710 1120,785 1090,840 1080,930 1050,1020 1068,1090 1050,1140 1085,1160 1092,1230 1065,1320 1050,1380 1030,1405 1050,1457",
  "1361,905 1350,940 1320,955 1285,955 1262,1000 1277,1040 1268,1100 1270,1170 1260,1210 1278,1240 1278,1320 1260,1370 1253,1457",
];
const westTrails = [
  "720,1398 705,1375 660,1382 665,1365 700,1325 737,1290 735,1275 682,1250 720,1222 668,1200 675,1185 728,1173 715,1165 628,1160 628,1145 660,1135 700,1090 733,1050 715,1045 670,1020 665,1005 710,997",
  "715,975 665,920 690,880 660,860 623,835 640,800 680,765",
  "735,752 770,705 735,675 780,650 797,612 740,595 735,580 752,550 715,545 728,515 690,505 652,490 690,468 668,462 665,435 630,418",
  "590,415 600,400 625,400 585,393 628,385 585,385 622,376 580,372 610,362 590,380 612,390",
  "540,345 520,320 505,342 470,325 440,285 418,275 440,260 470,265 432,238 460,232 490,238 440,212 510,212",
  "393,125 400,160 420,195 440,212",
  "630,125 625,165 600,180 560,205 555,195",
  "550,220 585,222 595,235 597,290 618,292 612,320 640,325 655,345 665,350 672,370 682,372 684,388 694,392 698,412 715,425 735,445 760,440 780,415 798,418 798,395 805,420 835,400 830,500 843,485 845,530 895,495 900,530 915,545 930,603 970,585 1020,530 1065,500 1095,460 1148,435 1155,505 1165,517 1210,520 1230,537 1275,540 1295,570 1307,625 1335,597 1350,605 1362,630 1370,690 1390,705 1405,700 1420,718 1455,712 1465,725 1480,720 1495,750 1510,742 1530,768 1540,762 1562,792 1568,785",
];
const eastTrail = "0,765 12,778 22,775 30,800 40,850 60,885 78,938 100,918 115,962 128,958 138,970 152,962 170,1000 195,1000 215,1030 360,1135 378,1172 430,1182 700,1250 895,1298 955,1298 1120,1332 1236,1375";

const stations: [string, number, number, number, number, number, number][] = [
  ["7", 530, 226, 530, 228, 1231, 430], ["6", 527, 375, 523, 377, 1231, 473], ["5", 596, 480, 597, 492, 1266, 513],
  ["4", 674, 632, 676, 633, 1317, 589], ["3", 692, 795, 690, 794, 1329, 671], ["2", 737, 992, 744, 987, 1341, 765],
  ["1", 773, 1280, 775, 1280, 1363, 909], ["10", 725, 413, 719, 422, 1360, 492], ["9", 783, 478, 795, 492, 1387, 524],
  ["8", 1000, 502, 1006, 496, 1514, 522], ["11", 1362, 676, 1375, 668, 1745, 611],
];
const heights: [string, number, number, number][] = [
  ["330", 1416, 366, -80], ["2800", 1661, 401, 90], ["2200", 1979, 459, -80], ["2000", 2120, 458, -74], ["1900", 2136, 681, -78], ["1800", 2270, 505, -65],
  ["1700", 2297, 706, -75], ["1600", 2507, 403, -80], ["1500", 2616, 430, -76], ["1400", 2617, 953, -84], ["2400", 1834, 573, -72], ["2900", 1368, 698, -50],
];

function MapView() {
  return (
    <svg viewBox="900 352 1906 725" className="block w-full" role="img" aria-label="Topographic map with trails and stations">
      <rect x="900" y="352" width="1906" height="725" fill="#d9e3be" />
      <path d="M900 352H1060V540Q1000 490 975 440T955 372L900 372Z" fill="#e9e5dc" />
      <path d="M1030 600Q990 700 940 760L900 800V860L950 880Q1010 780 1060 720V600Z" fill="#cfd8af" opacity=".6" />
      <path d="M900 900Q940 960 960 1040L940 1077H1060V990Q1000 950 960 860Z" fill="#cdd6ad" opacity=".5" />
      <g fill="none" stroke="#bfc599" strokeWidth="2">
        {Array.from({ length: 24 }, (_, i) => (
          <path key={i} d={curve([[895, 470 + i * 24], [925, 498 + i * 24], [965, 525 + i * 24], [985, 532 + i * 24], [1015, 556 + i * 23], [1055, 574 + i * 22]])} />
        ))}
        {Array.from({ length: 5 }, (_, i) => (
          <path key={i} d={curve([[902 + i * 13, 374], [903 + i * 13, 405], [914 + i * 14, 445 - i * 3], [950 + i * 13, 500 - i * 6], [1056, 566 - i * 16]])} />
        ))}
      </g>
      <g fill="none" stroke="#cbbda5" strokeWidth="2">
        {Array.from({ length: 8 }, (_, i) => (
          <path key={i} d={curve([[960 + i * 15, 364], [964 + i * 15, 400], [990 + i * 13, 450 - i * 4], [1056, 510 - i * 15]])} />
        ))}
        {Array.from({ length: 6 }, (_, i) => <path key={i} d={`M${900 + i * 18} ${372}L${930 + i * 22} 352`} />)}
      </g>
      <g fontFamily='"Open Sans","Noto Sans CJK JP",sans-serif' fill="#85857c" stroke="#e4e4da" strokeWidth="4" paintOrder="stroke">
        <text x="992" y="398" fontSize="36">剣ヶ</text>
        <text x="934" y="495" fontSize="31">Kengami</text>
      </g>
      <g fill="none" stroke="#c1c89b" strokeWidth="2">
        {Array.from({ length: 26 }, (_, i) => <path key={i} d={`M${1080 + i * 48 + (i % 3) * 9} 1080Q${1090 + i * 48} 1050 ${1105 + i * 49} 1033`} />)}
        <path d="M2075 1034Q2080 1060 2096 1060T2114 1034" strokeWidth="3" />
      </g>
      <path d="M1178 1036L1225 1050L1240 1075M1240 1042L1300 1066L1290 1077" fill="none" stroke="#b8b8bd" strokeWidth="5" />
      <rect x="2372" y="1033" width="434" height="44" fill="#d5d6d2" />
      <rect x="2683" y="352" width="123" height="326" fill="#dbe6c3" />
      <rect x="2683" y="678" width="123" height="107" fill="#d0d3c9" />
      <rect x="2683" y="785" width="123" height="292" fill="#d5d6d2" />
      <g fill="none" stroke="#c4ca9f" strokeWidth="3">
        <path d="M2706 352Q2690 400 2685 440M2757 352Q2755 420 2735 450Q2720 500 2688 560M2806 440Q2790 520 2765 550Q2750 600 2758 640Q2750 700 2755 740" />
        <path d="M2755 740Q2740 780 2720 800Q2715 900 2690 1000M2806 820Q2770 900 2765 920Q2750 1000 2740 1077M2460 1034Q2450 1060 2440 1077M2560 1034Q2555 1060 2570 1077" stroke="#c9c9c0" />
      </g>
      <path d="M2683 586H2806" stroke="#b3b8a0" strokeWidth="4" strokeDasharray="30 10 6 10" />
      <path d="M2660 1040L2700 1050L2725 1060L2755 1056M2770 1060L2780 1077" stroke="#bdbdbd" strokeWidth="4" fill="none" />

      <rect x="1052" y="350" width="1631" height="684" fill="#fff" />
      <g fill="none" stroke="#6b1410" strokeWidth="2" strokeLinejoin="round">
        {westContours.map((s, i) => <path key={i} d={curve(pts(s, west))} />)}
        {eastContours.map((s, i) => <path key={i} d={curve(pts(s, east))} />)}
      </g>
      <g fill="none" stroke="#150404" strokeWidth="5" strokeLinejoin="round" strokeLinecap="round">
        {westTrails.map((s, i) => <path key={i} d={line(pts(s, west))} />)}
        <path d={line(pts(eastTrail, east))} />
      </g>
      <path transform="translate(1112 979)" d="M0-42L4-14L20-21L13-5L43 0L13 5L20 21L4 14L0 43L-4 14L-20 21L-13 5L-43 0L-13-5L-20-21L-4-14Z" fill="#000" />
      <g textAnchor="middle" fontFamily='"Liberation Sans",sans-serif' stroke="#fff" strokeWidth="4" paintOrder="stroke">
        <text x="1112" y="932" fontSize="18" fontWeight="bold" strokeWidth="2">N</text>
        {heights.map(([t, x, y, r]) => <text key={t} transform={`translate(${x} ${y}) rotate(${r})`} y="7" fontSize="20" fontWeight="bold">{t}</text>)}
      </g>
      {stations.map(([t, x, y, dx, dy, tx, ty]) => {
        const [cx, cy] = west(x, y), [px, py] = west(dx, dy);
        return (
          <g key={t}>
            <rect x={cx - 12} y={cy - 12} width="25" height="25" rx="2" fill="#fff" stroke="#0d4a16" strokeWidth="3" />
            <path d={`M${cx - 8} ${cy - 1}L${cx} ${cy - 7}L${cx + 8} ${cy - 1}M${cx - 5} ${cy - 2}V${cy + 8}M${cx + 5} ${cy - 2}V${cy + 8}M${cx} ${cy - 5}V${cy + 6}`} stroke="#0d4a16" strokeWidth="3" fill="none" />
            <circle cx={px} cy={py} r="5.500" fill={t === "1" ? "#28c4e4" : "#93368c"} stroke={t === "1" ? "#28c4e4" : "#1c0a1c"} strokeWidth="1.500" />
            <text x={tx} y={ty} textAnchor="middle" fontFamily='"Liberation Sans",sans-serif' fontSize="23" fontWeight={t === "7" || t === "1" ? "normal" : "bold"} fill="#f00" stroke="#fff" strokeWidth="4" paintOrder="stroke">{t}</text>
          </g>
        );
      })}
      <g textAnchor="middle" fontFamily='"Noto Sans CJK JP",sans-serif' fontSize="26" fontWeight="500" stroke="#fff" strokeWidth="5" paintOrder="stroke">
        <text x="1817" y="723">Gotenba</text>
        <text x="1311" y="1003">Fujinomiya</text>
      </g>
      <path d="M2754 1032H2762V1028H2776V1032H2791V1061H2784V1057H2776V1061H2766V1057H2759V1061H2752V1032Z" fill="#fff" stroke="#777" strokeWidth="2.500" />
      <path d="M2759 1041H2785M2759 1049H2785" stroke="#666" strokeWidth="2.500" />
    </svg>
  );
}

const Bar = ({ className = "" }: P) => <span className={className + " h-7 w-[2px] shrink-0 bg-[#8c8c8c]"} />;

function MapPane() {
  return (
    <section aria-label="Map" className="flex flex-col">
      <div className="flex h-[42px] items-end justify-between pr-2">
        <div className="flex h-[42px] w-[152px] items-center gap-[10px] rounded-t-lg bg-[#d3d5d8] pl-[11px] text-[22px] text-[#4c4c4c]">
          <MapI /><span className="flex-1">Map</span><button aria-label="Close map" className="mr-[14px] grid"><Close /></button>
        </div>
        <button aria-label="Views" className="mb-3"><Chevron color="#777" /></button>
      </div>
      <div className="h-[6px] bg-[#d3d5d8]" />
      <MapView />
      <div className="flex h-[49px] items-center border-b-2 border-[#d3d5d8] bg-[#f7f9f8] pr-2 pl-3 text-[22px] text-[#4c4c4c]">
        <label className="flex h-11 w-[198px] items-center border-2 border-[#bfc0c4] bg-white pr-2 pl-[11px] text-[#222]">
          <select aria-label="Scale" className="min-w-0 flex-1 appearance-none bg-transparent outline-none"><option>1:32,310</option></select>
          <Chevron />
        </label>
        <Bar className="ml-[10px]" />
        <div className="ml-[10px] flex items-center gap-[9px]">
          <button aria-label="Snapping"><AddGridI /></button><button aria-label="Grid"><FullGridI /></button><button aria-label="Inference"><InferI /></button>
          <button aria-label="Constraints"><CrossI /></button><button aria-label="North"><NorthI /></button><button aria-label="Correction"><RouteI /></button>
        </div>
        <button aria-label="More" className="ml-[14px]"><Chevron color="#222" w={3} /></button>
        <Bar className="ml-4" />
        <div className="flex flex-1 items-center justify-center gap-[18px] pt-1 text-[23px]"><span>21,058.06E 74,754.68S m</span><Chevron className="w-5" w={3} /></div>
        <Bar />
        <button className="ml-[10px] flex h-10 items-center gap-2 bg-white px-[6px]"><ZoomI />Selected Features: 1</button>
        <Bar className="ml-[10px]" />
        <button aria-label="Clear selection" className="mx-4"><ShapeI /></button>
        <Bar />
        <button aria-label="Pause drawing" className="mx-4 flex gap-[6px]"><span className="h-7 w-2 bg-[#666]" /><span className="h-7 w-2 bg-[#666]" /></button>
        <Bar />
        <button aria-label="Refresh" className="ml-[10px]"><Refresh /></button>
      </div>
    </section>
  );
}

/* ---------- attribute table ---------- */
const TB = ({ icon, label, className = "" }: { icon: React.ReactNode; label: string; className?: string }) => (
  <button className={className + " flex items-center gap-1 whitespace-nowrap"}>{icon}{label}</button>
);

function TablePane() {
  return (
    <section aria-label="Attribute table" className="mt-[15px] flex min-h-0 flex-1 flex-col text-[22px] text-[#4c4c4c]">
      <div className="flex h-11 items-center justify-between pr-2">
        <div className="flex h-11 w-[115px] items-center gap-[11px] rounded-t-lg bg-[#d3d5d8] pl-[10px]">
          <GridI /><span className="flex-1">1</span><button aria-label="Close table" className="mr-3 grid"><Close /></button>
        </div>
        <button aria-label="Tables"><Chevron color="#777" /></button>
      </div>
      <div className="h-[6px] bg-[#d3d5d8]" />
      <div className="flex min-h-0 flex-1 flex-col bg-[#f7f9f8] pr-[2px] pl-1">
        <div className="mt-[2px] flex h-[61px] items-center border-2 border-[#bdbec2] bg-[#eef0f2] pr-4 pl-[10px] text-[23px]">
          <b className="font-bold">Field:</b>
          <TB className="ml-[12px] text-[#b5b5b5]" icon={<FieldAddI />} label="Add" />
          <TB className="ml-5" icon={<CalcI />} label="Calculate" />
          <span className="mx-4 ml-5 h-10 w-[2px] bg-[#cfd0d3]" />
          <b className="font-bold">Selection:</b>
          <div className="ml-[14px] flex gap-4">
            <TB icon={<SelAttrI />} label="Select By Attributes" />
            <TB icon={<ZoomRowsI />} label="Zoom To" />
            <TB icon={<SwitchI />} label="Switch" />
            <TB icon={<ClearRowsI />} label="Clear" />
            <TB icon={<DelRowsI />} label="Delete" />
            <TB icon={<CopyRowsI />} label="Copy" />
          </div>
          <button aria-label="Table menu" className="ml-auto flex w-7 flex-col gap-1"><span className="h-[5px] rounded bg-[#666]" /><span className="h-[5px] rounded bg-[#666]" /><span className="h-[5px] rounded bg-[#666]" /></button>
        </div>
        <div className="mt-[3px] flex min-h-0 flex-1 border-2 border-[#d6d6d6]">
          <div className="flex min-w-0 flex-1 flex-col">
            <div className="min-h-0 flex-1 overflow-hidden bg-white">
              <table className="table-fixed border-collapse text-left">
                <colgroup><col className="w-[45px]" /><col className="w-[53px]" /><col className="w-[100px]" /><col className="w-[42px]" /></colgroup>
                <thead>
                  <tr className="h-[47px] bg-[#eaeaea]">
                    <th className="bg-white pt-3 pl-5"><svg viewBox="0 0 20 20" className="w-5" fill="#c8c8c8" aria-hidden="true"><path d="M20 0V20H0Z" /></svg></th>
                    <th className="border-r-2 border-[#c9c9c9] pl-2 font-bold">FID</th>
                    <th className="border-r-2 border-[#c9c9c9] pl-2 font-bold whitespace-nowrap">Shape *</th>
                    <th className="border-b-[5px] border-b-[#0079c1] bg-[#c6e1f5] pl-2 font-bold">Id</th>
                  </tr>
                </thead>
                <tbody>
                  {Array.from({ length: 12 }, (_, i) => {
                    const bg = i === 0 ? "bg-[#80ffff]" : i % 2 ? "bg-[#eaeaea]" : "bg-white";
                    return (
                      <tr key={i} className="h-[47px]">
                        <td className={(i === 1 ? "border-r-4 border-r-[#0079c1] bg-[#c6e1f5]" : "border-r-2 border-r-[#d3d3d3] bg-[#eeeeee]") + " border-b-2 border-b-[#d3d3d3] pl-[8px]"}>{i + 1}</td>
                        <td className={bg + " border-r-2 border-b-2 border-[#c9c9c9] pl-[7px]"}>{i}</td>
                        <td className={bg + " border-r-2 border-b-2 border-[#c9c9c9] pl-[7px]"}>Point</td>
                        <td className={(i === 1 ? "bg-[#c6e1f5]" : bg) + " border-r-2 border-b-2 border-[#c9c9c9] pr-[8px] text-right"}>{i + 1}</td>
                      </tr>
                    );
                  })}
                </tbody>
              </table>
            </div>
            <div className="flex h-[33px] items-center justify-between bg-[#f4f4f4] px-[14px]">
              <svg viewBox="0 0 8 14" className="w-2" fill="none" stroke="#c9c9c9" strokeWidth="2" aria-hidden="true"><path d="M7 0L1 7L7 14" /></svg>
              <svg viewBox="0 0 8 14" className="w-2" fill="none" stroke="#c9c9c9" strokeWidth="2" aria-hidden="true"><path d="M1 0L7 7L1 14" /></svg>
            </div>
          </div>
          <div className="flex w-[34px] flex-col items-center bg-[#ebebeb] pt-3 pb-[44px]">
            <Chevron className="w-[14px]" d="M2 9L8 2L14 9" />
            <div className="mt-4 mb-14 w-[17px] flex-1 rounded-full bg-[#b4b4b4]" />
            <Chevron className="w-[14px]" />
          </div>
        </div>
        <footer className="flex h-[58px] items-center pr-3">
          <button aria-label="Show all records" className="flex h-[47px] w-[63px] items-center justify-center rounded-lg border-2 border-[#3d9ad5] bg-[#c3c4c8]">
            <I className="size-8"><Rows x={1} y={3} w={30} h={26} f={["#fff", PALE, "#fff", PALE]} /></I>
          </button>
          <button aria-label="Show selected records" className="-mt-2 ml-[18px]"><I><Rows x={1} y={6} w={30} h={20} f={[PALE, PALE, PALE]} /></I></button>
          <button aria-label="Previous record" className="ml-[34px]"><svg viewBox="0 0 20 20" className="w-5" fill="#666" aria-hidden="true"><path d="M1 1H3V19H1ZM19 1V19L6 10Z" /></svg></button>
          <button aria-label="Next record" className="ml-[26px]"><svg viewBox="0 0 20 20" className="w-5" fill="#666" aria-hidden="true"><path d="M17 1H19V19H17ZM1 1V19L14 10Z" /></svg></button>
          <span className="ml-[26px] text-[23px]">1 of 12 selected</span>
          <span className="ml-auto">Filters:</span>
          <button aria-label="Time filter" className="ml-[10px] flex size-[42px] items-center justify-center rounded-lg bg-[#eceeef]"><I><g opacity=".3"><circle cx="16" cy="16" r="14" /><circle cx="16" cy="16" r="9" fill="#bfe0c4" stroke="none" /><path d="M16 8V17H22" /></g></I></button>
          <button aria-label="Range filter" className="flex size-[42px] items-center justify-center rounded-lg bg-[#eceeef]"><I><g opacity=".3"><circle cx="18" cy="17" r="13" /><circle cx="18" cy="17" r="8" fill="#bfe0c4" stroke="none" /><path d="M5 1V14M11 1V14M17 1V14M2 5H8M8 10H14M14 5H20" stroke={BL} /></g></I></button>
          <button aria-label="Extent filter" className="ml-2"><I className="size-[34px]"><path d="M1 2H27L18 14V30H11V14Z" fill="#b5b5b5" /><path d="M1 3H27" strokeWidth="3" /><path d="M15 14H33V33H15Z" fill="#f7f9f8" stroke="none" /><rect x="18" y="17" width="12" height="12" stroke={BL} strokeWidth="4" strokeDasharray="4 2" /></I></button>
          <Bar className="ml-1" />
          <button aria-label="Sort" className="ml-[10px]"><I className="w-6" vb="0 0 24 32"><path d="M12 3V16M5 10L12 2L19 10" stroke="#a9cdb0" strokeWidth="3" /><path d="M12 16V29M5 22L12 30L19 22" stroke="#f0c79b" strokeWidth="3" /></I></button>
          <button aria-label="Zoom out" className="ml-6"><span className="block h-1 w-3 bg-[#666]" /></button>
          <label className="ml-4 grid w-[200px] items-center">
            <span className="col-start-1 row-start-1 flex h-1"><span className="w-1/2 bg-[#777]" /><span className="w-1/2 bg-[#dedede]" /></span>
            <input aria-label="Zoom" type="range" defaultValue={50} className="col-start-1 row-start-1 h-6 appearance-none bg-transparent [&::-webkit-slider-thumb]:h-[22px] [&::-webkit-slider-thumb]:w-1 [&::-webkit-slider-thumb]:appearance-none [&::-webkit-slider-thumb]:bg-[#666]" />
          </label>
          <button aria-label="Zoom in" className="ml-[13px]"><svg viewBox="0 0 18 18" className="w-[18px]" stroke="#555" strokeWidth="4" aria-hidden="true"><path d="M0 9H18M9 0V18" /></svg></button>
          <label className="ml-3 flex h-[52px] w-[119px] items-center bg-white pr-[6px] pl-[11px] text-[23px] text-[#222]">
            <select aria-label="Zoom level" className="min-w-0 flex-1 appearance-none bg-transparent outline-none"><option>100%</option></select>
            <Chevron />
          </label>
          <Bar className="ml-[10px]" />
          <button aria-label="Reload table" className="ml-3"><Refresh /></button>
        </footer>
      </div>
    </section>
  );
}

export default function App() {
  return (
    <div className='relative h-screen overflow-hidden bg-white font-["Open_Sans","Noto_Sans_CJK_JP",sans-serif] text-[#262626]'>
      <div className="flex h-full flex-col overflow-hidden border-t-4 border-r-[3px] border-b-4 border-white bg-[#eef0f2]">
        <Ribbon />
        <main className="mt-[14px] flex min-h-0 flex-1 gap-[13px]">
          <Contents />
          <div className="flex min-w-0 flex-1 flex-col">
            <MapPane />
            <TablePane />
          </div>
        </main>
      </div>
      <div className="absolute top-1 left-[1572px] h-[2px] w-[363px] bg-[#a9aaad]" />
      <ContextMenu />
      <div className="absolute top-[74px] left-[295px] h-[150px] w-[134px] border-[14px] border-[#ff0000]" />
      <svg viewBox="0 0 360 630" className="pointer-events-none absolute top-[700px] left-[755px] w-[360px]" aria-hidden="true">
        <path d="M6 7L334 588" stroke="#ff0000" strokeWidth="14" />
        <path d="M353 623L315 597L353 577Z" fill="#ff0000" />
      </svg>
    </div>
  );
}
